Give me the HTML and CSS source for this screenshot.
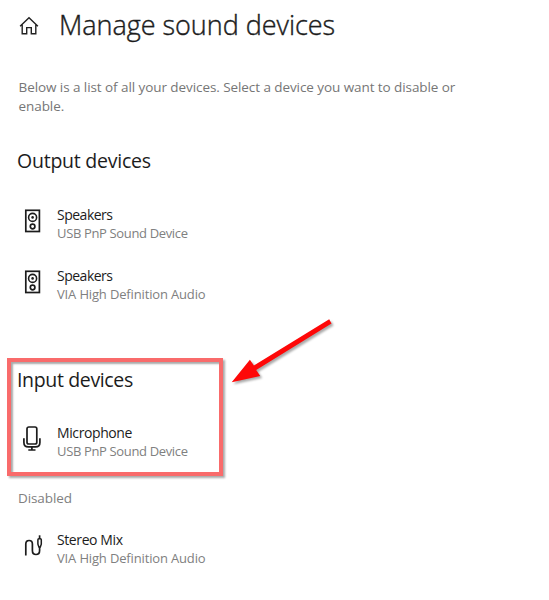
FILE: index.html
```html
<!DOCTYPE html>
<html lang="en">
<head>
<meta charset="utf-8">
<title>Manage sound devices</title>
<link rel="stylesheet" href="styles.css">
</head>
<body>
<svg class="defs" width="0" height="0" aria-hidden="true">
  <symbol id="speaker" viewBox="0 0 18 24">
    <g fill="none" stroke="#1c1c1c">
      <rect x="1.800" y="1.300" width="13.600" height="21.200" stroke-width="1.700"/>
      <circle cx="8.600" cy="8.400" r="4" stroke-width="1.600"/>
      <circle cx="8.600" cy="17.500" r="2.300" stroke-width="1.700"/>
    </g>
    <circle cx="8.600" cy="8.400" r="1.300" fill="#1c1c1c"/>
  </symbol>
</svg>
<main class="page">
  <header class="title-bar">
    <svg class="home" width="20" height="20" viewBox="0 0 20 20" fill="none" stroke="#222" stroke-width="1.4"><path d="M1.1 10.2 10 1.8l8.9 8.4M3.2 8.4v9.400h4.500v-6.200h4.600v6.200h4.500V8.400"/></svg>
    <h1>Manage sound devices</h1>
  </header>
  <p class="intro">Below is a list of all your devices. Select a device you want to disable or<br>enable.</p>
  <section class="output">
    <h2>Output devices</h2>
    <div class="device">
      <svg class="icon" width="18" height="24"><use href="#speaker"/></svg>
      <div><div class="name speakers">Speakers</div><div class="detail usb">USB PnP Sound Device</div></div>
    </div>
    <div class="device">
      <svg class="icon" width="18" height="24"><use href="#speaker"/></svg>
      <div><div class="name speakers">Speakers</div><div class="detail via">VIA High Definition Audio</div></div>
    </div>
  </section>
  <section class="input">
    <h2>Input devices</h2>
    <div class="device">
      <svg class="icon mic-icon" width="18" height="26" viewBox="0 0 18 26" fill="none" stroke="#1c1c1c" stroke-width="1.7"><rect x="4" y="1" width="9.800" height="17" rx="1.800"/><path d="M.9 12.300v4.200q0 4.400 4.400 4.400h7.200q4.400 0 4.400-4.400v-4.200M8.900 20.900v3M5.300 24h7.200"/></svg>
      <div><div class="name mic">Microphone</div><div class="detail usb">USB PnP Sound Device</div></div>
    </div>
  </section>
  <section class="disabled">
    <h3>Disabled</h3>
    <div class="device">
      <svg class="icon jack" width="20" height="22" viewBox="0 0 20 22" fill="none" stroke="#1c1c1c" stroke-width="1.7"><path d="M1.800 20.500V9q0-3.500 3.300-3.500T8.400 9v6.500q0 4 3.600 4t3.600-4V12"/><path d="M15.600 .3v3.500"/><path d="M13.900 4.800q0-1 1-1h1.400q1 0 1 1v4.400l-1 2.800h-1.400l-1-2.800z" stroke-width="1.500"/></svg>
      <div><div class="name stereo">Stereo Mix</div><div class="detail via">VIA High Definition Audio</div></div>
    </div>
  </section>
  <svg class="arrow" width="110" height="76" viewBox="0 0 110 76"><path fill="#fe0808" d="M99.200 4.200 23.900 50.500 19.900 44.800 1.700 67.200 30.200 61 26.200 55 101.500 8.600z"/></svg>
</main>
</body>
</html>
```
FILE: styles.css
```css
* { box-sizing: border-box; }
body { margin: 0; background: #fff; color: #1c1c1c; font-family: "Open Sans", "Noto Sans", sans-serif; }
.page { position: relative; width: 549px; height: 600px; overflow: hidden; }
h1, h2, h3, p { margin: 0; font-weight: 400; white-space: nowrap; }
.defs { display: block; height: 0; }
.title-bar { display: flex; align-items: center; height: 50px; padding-left: 19px; }
.home { margin-top: 2px; }
h1 { margin-left: 20px; font-size: 27px; line-height: 50px; font-weight: 300; letter-spacing: -0.03px; -webkit-text-stroke: 0.4px #1c1c1c; }
.intro { margin: 28px 0 0 18.5px; font-size: 13.5px; line-height: 19px; color: #767676; letter-spacing: -0.075px; }
h2 { font-size: 19.5px; line-height: 30px; letter-spacing: -0.23px; }
.output { margin-top: 30px; padding-left: 17px; }
.device { display: flex; align-items: center; height: 36px; }
.device + .device { margin-top: 25px; }
.icon { position: relative; top: -3px; width: 18px; flex: none; margin: 0 15px 0 7px; overflow: visible; }
.mic-icon { margin: 0 16px 0 6px; }
.jack { width: 20px; margin-right: 13px; }
.output .device:nth-of-type(1) { margin-top: 30px; }
.name { font-size: 14px; line-height: 18px; white-space: nowrap; letter-spacing: -0.4px; }
.speakers { letter-spacing: -0.5px; }
.detail { font-size: 13px; line-height: 18px; color: #808080; white-space: nowrap; }
.usb { letter-spacing: -0.35px; }
.via { letter-spacing: -0.15px; }
.input { width: 216px; height: 118px; margin: 55px 0 0 7px; padding: 3px 0 0 6px; border: 4px solid #f96b6b; box-shadow: 2px 2px 2px #aaa, inset 2px 2px 2px #aaa; }
.input h2 { letter-spacing: -0.35px; }
.input .device { margin-top: 29px; }
.disabled { margin-top: 12px; padding-left: 17px; }
h3 { margin-left: 1px; font-size: 13.5px; line-height: 20px; color: #808080; letter-spacing: -0.1px; }
.disabled .device { margin-top: 23px; }
.arrow { position: absolute; left: 230px; top: 315px; filter: drop-shadow(2px 2px 1px #aaa); }
```
